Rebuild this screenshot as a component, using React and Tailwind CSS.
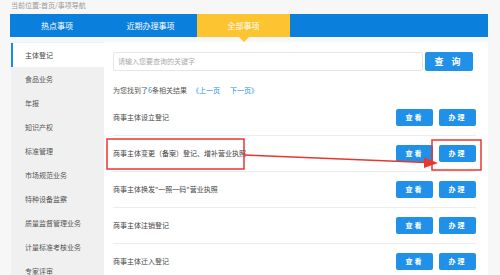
const menu = ['主体登记', '食品业务', '年报', '知识产权', '标准管理', '市场规范业务', '特种设备监察', '质量监督管理业务', '计量标准考核业务', '专家评审'];

const rows = ['商事主体设立登记', '商事主体变更（备案）登记、增补营业执照', '商事主体换发"一照一码"营业执照', '商事主体注销登记', '商事主体迁入登记'];

const App = () => {
    return (
        <div className="relative w-[500px] h-[275px] overflow-hidden bg-[#f7f7f7] font-['Noto_Sans_CJK_SC',sans-serif]">
            {/* Breadcrumb */}
            <div className="h-[14px] pl-[11px] text-[7px] leading-[11px] text-[#999]">当前位置:首页/事项导航</div>

            {/* Tabs */}
            <div className="ml-[10px] w-[478px] h-[23px] bg-[#0a80dc] flex text-white text-[8px]">
                <div className="w-[94px] flex items-center justify-center">热点事项</div>
                <div className="w-[93px] flex items-center justify-center">近期办理事项</div>
                <div className="relative w-[93px] flex items-center justify-center bg-[#fcc430]">
                    全部事项
                    <span className="absolute left-1/2 -translate-x-1/2 top-full border-x-[5px] border-x-transparent border-t-[5px] border-t-[#fcc430]" />
                </div>
            </div>

            {/* Main */}
            <div className="mt-[5px] ml-[11px] w-[477px] h-[240px] bg-white flex">
                {/* Sidebar */}
                <div className="w-[93px] bg-[#f0f0f0] pt-[1px]">
                    {menu.map((m, i) => (
                        <div
                            key={m}
                            className={i === 0
                                ? 'h-[24px] flex items-center pl-[12px] text-[7px] text-[#444] bg-white border-l-2 border-[#1a8ae6]'
                                : 'h-[24px] flex items-center pl-[14px] text-[7px] text-[#555]'}
                        >
                            {m}
                        </div>
                    ))}
                </div>

                {/* Content */}
                <div className="flex-1 pl-[9px] pr-[12px] pt-[10px]">
                    <div className="flex items-center h-[19px]">
                        <div className="w-[310px] h-[19px] border border-[#e6e6e6] rounded-[2px] flex items-center pl-[4px] text-[7px] text-[#aaa]">
                            请输入您要查询的关键字
                        </div>
                        <button className="ml-[2px] w-[48px] h-[19px] bg-[#2090e8] rounded-[2px] text-white text-[9px] font-bold tracking-[3px]">查 询</button>
                    </div>
                    <div className="mt-[13px] h-[12px] flex items-center text-[7px] text-[#555]">
                        <span>为您找到了<span className="text-[#2090e8]">6</span>条相关结果</span>
                        <span className="ml-[5px] text-[#2090e8]">《上一页</span>
                        <span className="ml-[10px] text-[#2090e8]">下一页》</span>
                    </div>
                    <div className="mt-[4px]">
                        {rows.map((r) => (
                            <div key={r} className="h-[36px] flex items-center justify-between border-b border-[#ececec]">
                                <span className="text-[7px] text-[#444]">{r}</span>
                                <div className="flex gap-[6px]">
                                    <button className="w-[37px] h-[17px] bg-[#2090e8] rounded-[2px] text-white text-[7px] font-bold tracking-[2px]">查看</button>
                                    <button className="w-[37px] h-[17px] bg-[#2090e8] rounded-[2px] text-white text-[7px] font-bold tracking-[2px]">办理</button>
                                </div>
                            </div>
                        ))}
                    </div>
                </div>
            </div>

            {/* Annotation overlay */}
            <svg className="absolute inset-0 pointer-events-none" width="500" height="275" viewBox="0 0 500 275">
                <rect x="107" y="139" width="137" height="30" fill="none" stroke="#e8372f" strokeWidth="1.5" />
                <rect x="432" y="140" width="49" height="30" fill="none" stroke="#e8372f" strokeWidth="1.5" />
                <line x1="244" y1="155" x2="426" y2="162.5" stroke="#e8372f" strokeWidth="1.5" />
                <polygon points="438,163 424,157.5 424,168" fill="#e8372f" />
            </svg>
        </div>
    );
};

export default App;
